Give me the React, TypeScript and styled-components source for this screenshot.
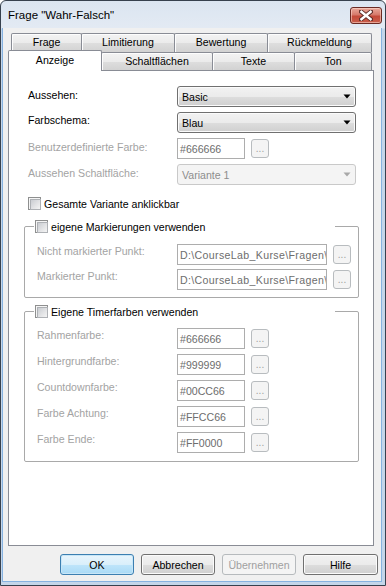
import React from 'react';
import styled, { createGlobalStyle } from 'styled-components';

const GlobalStyle = createGlobalStyle`
  html, body { margin: 0; padding: 0; background: #ffffff; }
  body { font-family: "Liberation Sans", Arial, sans-serif; }
  * { box-sizing: border-box; }
`;

const Window = styled.div`
  width: 386px;
  height: 586px;
  display: flex;
  flex-direction: column;
  border: 1px solid #37414e;
  border-radius: 6px 6px 0 0;
  background: linear-gradient(to bottom, #dbe5f1 0px, #e3eaf3 27px, #c4d6ea 28px, #c4d6ea 100%);
  font-family: "Liberation Sans", Arial, sans-serif;
  overflow: hidden;
`;

const TitleBar = styled.div`
  height: 27px;
  flex: none;
  display: flex;
  justify-content: space-between;
  align-items: flex-start;
  padding: 0 3px 0 7px;
`;

const Title = styled.span`
  font-size: 11.5px;
  line-height: 14px;
  padding-top: 7px;
  color: #000;
`;

const CloseButton = styled.div`
  width: 32px;
  height: 17px;
  margin-top: 6px;
  border: 1px solid #6a2a24;
  border-radius: 3px;
  background: linear-gradient(to bottom, #e9a99b 0%, #d67a6b 45%, #c44a39 55%, #c9604d 100%);
  box-shadow: inset 0 0 0 1px rgba(255, 220, 210, 0.55);
  display: flex;
  align-items: center;
  justify-content: center;
`;

const Client = styled.div`
  flex: 1;
  margin: 0 3px 3px 1px;
  background: #f0f0f0;
  border: 1px solid #86b2e0;
  border-top: none;
  padding: 5px 3px 6px 5px;
  display: flex;
  flex-direction: column;
`;

const TabControl = styled.div`
  display: flex;
  flex-direction: column;
`;

const TabRow = styled.div<{ $front?: boolean }>`
  display: flex;
  align-items: flex-end;
  height: ${p => (p.$front ? 20 : 19)}px;
  margin-top: ${p => (p.$front ? -2 : 0)}px;
  padding-left: ${p => (p.$front ? 0 : 3)}px;
  position: relative;
  z-index: ${p => (p.$front ? 2 : 1)};
`;

const Tab = styled.div<{ $w: number; $selected?: boolean; $back?: boolean }>`
  width: ${p => p.$w}px;
  flex: none;
  height: ${p => (p.$selected ? 21 : p.$back ? 19 : 18)}px;
  margin-bottom: ${p => (p.$selected ? -1 : 0)}px;
  margin-left: -1px;
  &:first-child { margin-left: 0; }
  border: 1px solid #898c95;
  border-bottom: none;
  border-radius: 2px 2px 0 0;
  background: ${p =>
    p.$selected
      ? '#ffffff'
      : 'linear-gradient(to bottom, #f3f3f3 0%, #ebebeb 50%, #dedede 51%, #d2d2d2 100%)'};
  box-shadow: ${p => (p.$selected ? 'none' : 'inset 1px 1px 0 #fdfdfd')};
  position: relative;
  z-index: ${p => (p.$selected ? 3 : 1)};
  font-size: 10.6px;
  color: #000;
  display: flex;
  justify-content: center;
  padding-top: ${p => (p.$selected ? 3 : 2)}px;
  line-height: 13px;
`;

const Panel = styled.div`
  width: 366px;
  height: 476px;
  background: #ffffff;
  border: 1px solid #898c95;
  position: relative;
  z-index: 1;
  padding: 15px 0 0 15px;
  display: flex;
  flex-direction: column;
`;

const Section = styled.div`
  display: flex;
  flex-direction: column;
  gap: 5px;
  padding-left: 4px;
`;

const FormRow = styled.div<{ $labelW: number }>`
  display: grid;
  grid-template-columns: ${p => p.$labelW}px auto auto;
  column-gap: 6px;
  align-items: center;
  justify-content: start;
  height: 21px;
`;

const Label = styled.span<{ $disabled?: boolean; $top?: number }>`
  font-size: 10.6px;
  line-height: 13px;
  color: ${p => (p.$disabled ? '#a3a3a3' : '#000')};
  align-self: start;
  padding-top: ${p => p.$top ?? 3}px;
  margin-right: -6px;
  white-space: nowrap;
`;

const Combo = styled.div<{ $disabled?: boolean }>`
  width: 179px;
  height: 21px;
  border: 1px solid ${p => (p.$disabled ? '#c9c9c9' : '#707070')};
  border-radius: 3px;
  background: ${p =>
    p.$disabled
      ? '#f4f4f4'
      : 'linear-gradient(to bottom, #f2f2f2 0%, #ebebeb 50%, #dddddd 51%, #cfcfcf 100%)'};
  box-shadow: ${p => (p.$disabled ? 'none' : 'inset 0 0 0 1px #fbfbfb')};
  display: flex;
  align-items: center;
  justify-content: space-between;
  padding: 0 4px 0 4px;
  font-size: 10.6px;
  color: ${p => (p.$disabled ? '#8d8d8d' : '#000')};
  grid-column: 2 / span 2;
`;

const TextBox = styled.div<{ $w: number; $spacing?: number }>`
  width: ${p => p.$w}px;
  height: 21px;
  border: 1px solid #adadad;
  background: #ffffff;
  font-size: 10.6px;
  letter-spacing: ${p => p.$spacing ?? 0}px;
  color: #6d6d6d;
  display: flex;
  align-items: center;
  padding-left: 2px;
  white-space: nowrap;
  overflow: hidden;
`;

const DotsButton = styled.div`
  width: 18px;
  height: 19px;
  border: 1px solid #b8bcbf;
  border-radius: 3px;
  background: #f4f4f4;
  font-size: 10px;
  color: #a0a0a0;
  display: flex;
  align-items: flex-end;
  justify-content: center;
  line-height: 14px;
  padding-bottom: 1px;
`;

const CheckRow = styled.label<{ $top?: number }>`
  display: flex;
  align-items: center;
  gap: 3px;
  height: 13px;
  margin-top: ${p => p.$top ?? 0}px;
  font-size: 10.6px;
  color: #000;
  white-space: nowrap;
`;

const CheckBox = styled.span`
  width: 13px;
  height: 13px;
  flex: none;
  border: 1px solid #8e8f8f;
  background: #f5f5f5;
  padding: 1px;
  display: block;
  &::after {
    content: '';
    display: block;
    width: 9px;
    height: 9px;
    border: 1px solid #aeb1b5;
    background: linear-gradient(135deg, #c9ccd1 0%, #e2e3e5 55%, #f4f4f4 100%);
  }
`;

const GroupBox = styled.fieldset<{ $top: number; $pt: number; $pb: number; $gap: number }>`
  width: 335px;
  margin: ${p => p.$top}px 0 0 0;
  padding: ${p => p.$pt}px 0 ${p => p.$pb}px 9px;
  border: 1px solid #a9a9a9;
  border-radius: 2px;
  min-width: 0;
  display: flex;
  flex-direction: column;
  gap: ${p => p.$gap}px;
`;

const Legend = styled.legend`
  width: 301px;
  height: 13px;
  padding: 0 0 0 1px;
  display: flex;
  align-items: center;
`;

const ButtonBar = styled.div`
  display: flex;
  justify-content: flex-end;
  gap: 7px;
  margin-top: 8px;
`;

const DialogButton = styled.div<{ $variant?: 'default' | 'disabled'; $w?: number }>`
  width: ${p => p.$w ?? 74}px;
  height: 21px;
  border-radius: 3px;
  font-size: 10.6px;
  display: flex;
  align-items: center;
  justify-content: center;
  border: 1px solid
    ${p => (p.$variant === 'default' ? '#3c7fb1' : p.$variant === 'disabled' ? '#b6babd' : '#707070')};
  color: ${p => (p.$variant === 'disabled' ? '#a0a0a0' : '#000')};
  background: ${p =>
    p.$variant === 'default'
      ? 'linear-gradient(to bottom, #e9f5fc 0%, #d9effb 50%, #bfe5fa 51%, #a9daf6 100%)'
      : p.$variant === 'disabled'
      ? '#f4f4f4'
      : 'linear-gradient(to bottom, #f2f2f2 0%, #ebebeb 50%, #dddddd 51%, #cfcfcf 100%)'};
  box-shadow: ${p =>
    p.$variant === 'default'
      ? 'inset 0 0 0 1px #c8e6f7'
      : p.$variant === 'disabled'
      ? 'none'
      : 'inset 0 0 0 1px #fbfbfb'};
`;

const Arrow = ({ color }: { color: string }) => (
  <svg width="8" height="5" viewBox="0 0 8 5">
    <path d="M0.5 0.5 L7.5 0.5 L4 4.5 Z" fill={color} />
  </svg>
);

const CloseGlyph = () => (
  <svg width="14" height="11" viewBox="0 0 14 11">
    <path
      d="M2 1.5 L12 9.5 M12 1.5 L2 9.5"
      stroke="#5a2a25"
      strokeWidth="4.2"
      strokeLinecap="round"
    />
    <path d="M2.4 1.8 L11.6 9.2 M11.6 1.8 L2.4 9.2" stroke="#ffffff" strokeWidth="2.4" strokeLinecap="square" />
  </svg>
);

const colorRows = [
  ['Rahmenfarbe:', '#666666'],
  ['Hintergrundfarbe:', '#999999'],
  ['Countdownfarbe:', '#00CC66'],
  ['Farbe Achtung:', '#FFCC66'],
  ['Farbe Ende:', '#FF0000'],
];

export default function App() {
  return (
    <>
      <GlobalStyle />
      <Window>
        <TitleBar>
          <Title>Frage "Wahr-Falsch"</Title>
          <CloseButton>
            <CloseGlyph />
          </CloseButton>
        </TitleBar>
        <Client>
          <TabControl>
            <TabRow>
              <Tab $back $w={71}>Frage</Tab>
              <Tab $back $w={94}>Limitierung</Tab>
              <Tab $back $w={94}>Bewertung</Tab>
              <Tab $back $w={105}>Rückmeldung</Tab>
            </TabRow>
            <TabRow $front>
              <Tab $selected $w={94}>Anzeige</Tab>
              <Tab $w={112}>Schaltflächen</Tab>
              <Tab $w={83}>Texte</Tab>
              <Tab $w={78}>Ton</Tab>
            </TabRow>
            <Panel>
              <Section>
                <FormRow $labelW={143}>
                  <Label>Aussehen:</Label>
                  <Combo>
                    Basic
                    <Arrow color="#000" />
                  </Combo>
                </FormRow>
                <FormRow $labelW={143}>
                  <Label $top={2}>Farbschema:</Label>
                  <Combo>
                    Blau
                    <Arrow color="#000" />
                  </Combo>
                </FormRow>
                <FormRow $labelW={143}>
                  <Label $disabled>Benutzerdefinierte Farbe:</Label>
                  <TextBox $w={68}>#666666</TextBox>
                  <DotsButton>...</DotsButton>
                </FormRow>
                <FormRow $labelW={143}>
                  <Label $disabled>Aussehen Schaltfläche:</Label>
                  <Combo $disabled>
                    Variante 1
                    <Arrow color="#a8a8a8" />
                  </Combo>
                </FormRow>
                <CheckRow $top={7}>
                  <CheckBox />
                  Gesamte Variante anklickbar
                </CheckRow>
              </Section>

              <GroupBox $top={10} $pt={11} $pb={7} $gap={4}>
                <Legend>
                  <CheckRow>
                    <CheckBox />
                    eigene Markierungen verwenden
                  </CheckRow>
                </Legend>
                <FormRow $labelW={137}>
                  <Label $disabled $top={1}>&nbsp;Nicht markierter Punkt:</Label>
                  <TextBox $w={150} $spacing={0.35}>D:\CourseLab_Kurse\Fragen\</TextBox>
                  <DotsButton>...</DotsButton>
                </FormRow>
                <FormRow $labelW={137}>
                  <Label $disabled $top={1}>&nbsp;Markierter Punkt:</Label>
                  <TextBox $w={150} $spacing={0.35}>D:\CourseLab_Kurse\Fragen\</TextBox>
                  <DotsButton>...</DotsButton>
                </FormRow>
              </GroupBox>

              <GroupBox $top={7} $pt={10} $pb={8} $gap={5}>
                <Legend>
                  <CheckRow>
                    <CheckBox />
                    Eigene Timerfarben verwenden
                  </CheckRow>
                </Legend>
                {colorRows.map(([label, value]) => (
                  <FormRow $labelW={137} key={label}>
                    <Label $disabled $top={1}>&nbsp;{label}</Label>
                    <TextBox $w={68}>{value}</TextBox>
                    <DotsButton>...</DotsButton>
                  </FormRow>
                ))}
              </GroupBox>
            </Panel>
          </TabControl>
          <ButtonBar>
            <DialogButton $variant="default">OK</DialogButton>
            <DialogButton>Abbrechen</DialogButton>
            <DialogButton $variant="disabled">Übernehmen</DialogButton>
            <DialogButton $w={75}>Hilfe</DialogButton>
          </ButtonBar>
        </Client>
      </Window>
    </>
  );
}
